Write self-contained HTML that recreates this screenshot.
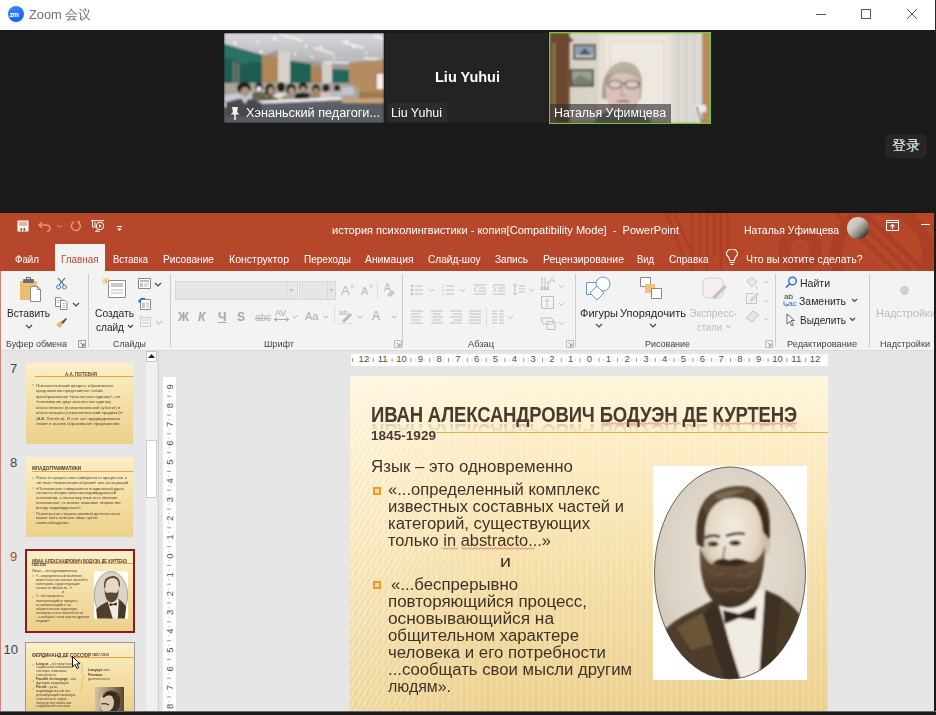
<!DOCTYPE html>
<html><head><meta charset="utf-8">
<style>
*{margin:0;padding:0;box-sizing:border-box}
html,body{width:936px;height:715px;overflow:hidden;background:#1a1a1a;font-family:"Liberation Sans",sans-serif;position:relative}
.a{position:absolute}
.t{position:absolute;white-space:nowrap;line-height:1}
.f{transform-origin:0 0}
.tab{color:#fff;font-size:11px;top:254px}
.rl{color:#444;font-size:9.5px;top:339px}
#ribbon{left:1px;top:271px;width:933px;height:80px;background:#f3f3f3;border-bottom:1px solid #dadada}
.sep{position:absolute;width:1px;background:#cdcdcd;top:274px;height:73px}
.rb{color:#262626;font-size:11px}
.dis{color:#b9b9b9}
.thumb{background:linear-gradient(180deg,#fcefc8 0%,#f6e2ab 40%,#ecd08c 100%);overflow:hidden}
.tx{font-size:4.3px;line-height:5.45px;color:#3e3024;white-space:nowrap;opacity:.9}
.st{font-size:16px;color:#3e3329}
</style></head><body>
<!-- Zoom title bar -->
<div class="a" style="left:0;top:0;width:936px;height:30px;background:#fff"></div>
<div class="a" style="left:8px;top:6px;width:16px;height:16px;border-radius:8px;background:linear-gradient(160deg,#3a8dff,#0b5cf0)"></div>
<div class="t" style="left:9.5px;top:10.5px;font-size:7px;font-weight:bold;color:#fff;letter-spacing:-0.4px">zm</div>
<div class="t f" style="left:29px;top:8px;font-size:13px;color:#707070;--w:62">Zoom 会议</div>
<div class="a" style="left:816px;top:14px;width:10px;height:1px;background:#555"></div>
<div class="a" style="left:861px;top:9px;width:10px;height:10px;border:1px solid #555"></div>
<svg class="a" style="left:906px;top:8px" width="12" height="12"><path d="M1 1L11 11M11 1L1 11" stroke="#555" stroke-width="1"/></svg>
<div class="a" style="left:935px;top:0;width:1px;height:30px;background:#2a2a2a"></div>
<!-- dark area -->
<div class="a" style="left:0;top:30px;width:936px;height:183px;background:#1a1a1a"></div>
<div class="a" style="left:885px;top:134px;width:42px;height:24px;border-radius:6px;background:#262626"></div>
<div class="t" style="left:892px;top:138px;font-size:14px;color:#fff">登录</div>
<!-- tile 1 classroom -->
<svg class="a" style="left:224px;top:33px" width="160" height="90" viewBox="0 0 160 90">
 <defs>
  <linearGradient id="ceil" x1="0" y1="0" x2="0" y2="1"><stop offset="0" stop-color="#dadadd"/><stop offset="1" stop-color="#b0b0b5"/></linearGradient>
  <filter id="tb" x="0" y="0" width="1" height="1"><feGaussianBlur stdDeviation="0.9"/></filter>
 </defs>
 <g filter="url(#tb)">
 <rect width="160" height="90" fill="#a09a92"/>
 <path d="M0 0H160V31L125 30L108 29L80 28L66 27L54 17L38 23L0 11Z" fill="url(#ceil)"/>
 <path d="M0 6L40 16L60 14L90 22L130 26L160 24" fill="none" stroke="#c8c8cc" stroke-width="1.2"/>
 <path d="M56 1L78 8M118 9L140 15M90 15L110 21M150 3L160 6M140 25L158 27M100 29L125 30" stroke="#f8f8fa" stroke-width="1.6"/>
 <g fill="#fff"><circle cx="11" cy="10" r="1.4"/><circle cx="51" cy="6" r="1.4"/><circle cx="34" cy="9" r="1.1"/><circle cx="37" cy="19" r="1.2"/><circle cx="71" cy="21" r="1.1"/><circle cx="82" cy="13" r="1.2"/><circle cx="97" cy="14" r="1.2"/><circle cx="123" cy="8" r="1.3"/><circle cx="130" cy="14" r="1.2"/><circle cx="142" cy="20" r="1"/><circle cx="110" cy="25" r="1"/><circle cx="88" cy="24" r="1.1"/></g>
 <path d="M0 11L38 22V52H0Z" fill="#1d5c52"/>
 <path d="M0 11L38 22L38 30Q28 26 20 32Q10 24 0 26Z" fill="#2a7264"/>
 <path d="M10 28V52M14 30V52" stroke="#8a8070" stroke-width="3" opacity=".7"/>
 <path d="M38 22L54 24V52H38Z" fill="#ae8658"/>
 <path d="M54 17L66 19V51H54Z" fill="#d6d2ca"/>
 <path d="M66 28L87 31V53H66Z" fill="#1f6457"/>
 <path d="M87 33L98 34V53H87Z" fill="#ab8459"/>
 <path d="M98 29L108 30V53H98Z" fill="#d4cfc6"/>
 <path d="M108 36L125 37V55H108Z" fill="#21675a"/>
 <path d="M125 30L160 26V64H125Z" fill="#b38d60"/>
 <rect x="152" y="40" width="8" height="17" fill="#f6f0f0" stroke="#b84838" stroke-width="1.2"/>
 <path d="M125 58L160 60V68L125 66Z" fill="#a07850"/>
 <path d="M0 50H125L135 56V70H0Z" fill="#aaa49c"/>
 <path d="M0 62L40 58V68H0Z" fill="#c8ccd8"/>
 <ellipse cx="35" cy="54" rx="4" ry="4.5" fill="#2a2420"/><ellipse cx="35" cy="56" rx="2.6" ry="2.4" fill="#ececea"/><path d="M28 60Q35 57 42 60V70H28Z" fill="#6a6450"/>
 <ellipse cx="57" cy="54" rx="4" ry="5" fill="#201a18"/><path d="M50 62Q57 58 64 62V70H50Z" fill="#e8e4de"/>
 <ellipse cx="46" cy="57" rx="5" ry="6.5" fill="#1e1816"/><ellipse cx="47" cy="58" rx="3" ry="4" fill="#b0947e"/><path d="M36 66Q46 61 56 66V74H36Z" fill="#5e5432"/>
 <ellipse cx="67" cy="56" rx="5" ry="5.5" fill="#221c1a"/><ellipse cx="67.5" cy="58" rx="3" ry="3.5" fill="#b89c88"/><path d="M57 64Q67 59 78 64V72H57Z" fill="#9a9278"/>
 <ellipse cx="79" cy="54" rx="4.5" ry="4.5" fill="#1c1818"/><ellipse cx="79" cy="56.5" rx="2.8" ry="3" fill="#b09480"/><path d="M71 61Q79 58 87 61V70H71Z" fill="#1e2022"/>
 <ellipse cx="92" cy="56" rx="4" ry="5" fill="#2a2320"/><ellipse cx="92" cy="58" rx="2.5" ry="3" fill="#b09078"/><path d="M85 62Q92 59 99 62V69H85Z" fill="#9a8462"/>
 <ellipse cx="102" cy="55" rx="3.5" ry="4" fill="#2a2320"/><path d="M96 60Q103 57 110 60V67H96Z" fill="#dcbcc0"/>
 <ellipse cx="113" cy="55" rx="3" ry="3.5" fill="#2a2320"/><path d="M107 59Q113 57 119 59V66H107Z" fill="#b8bcc2"/>
 <rect x="118" y="54" width="12" height="8" fill="#c0c4cc"/>
 <path d="M0 70L30 68L115 64L118 67L30 72L0 76Z" fill="#ecebee"/>
 <path d="M0 74L30 71L118 67L160 68V90H0Z" fill="#585c64"/>
 <path d="M0 78L120 70M0 84L150 76" stroke="#6a6e76" stroke-width="1"/>
 <ellipse cx="20" cy="55" rx="7" ry="6" fill="#1b1918"/><ellipse cx="21" cy="59" rx="4.5" ry="5" fill="#b09482"/><path d="M2 70Q20 61 38 70V84H2Z" fill="#484a4e"/><path d="M17 65L21 71L25 65" fill="#c8c8c8"/>
 <path d="M118 66L160 65V70L118 70Z" fill="#c8a478"/>
 </g>
</svg>
<svg class="a" style="left:229px;top:106px" width="12" height="15"><path d="M3 1H9L8 6L10.5 8.5H1.5L4 6Z" fill="#f2f2f2"/><path d="M6 8V14" stroke="#f2f2f2" stroke-width="1.6"/></svg>
<div class="t f" style="left:246px;top:107px;font-size:12px;color:#fff;--w:134">Хэнаньский педагоги...</div>

<!-- tile 2 -->
<div class="a" style="left:385px;top:33px;width:163px;height:90px;background:#232323"></div>
<div class="t f" style="left:435px;top:70px;font-size:14px;font-weight:bold;color:#fff;--w:65">Liu Yuhui</div>
<div class="a" style="left:388px;top:103px;width:59px;height:19px;background:#2c2c2c"></div>
<div class="t f" style="left:391px;top:107px;font-size:12px;color:#fff;--w:51">Liu Yuhui</div>

<!-- tile 3 -->
<div class="a" style="left:549px;top:32px;width:162px;height:92px;background:#7cc142"></div>
<svg class="a" style="left:550px;top:33px" width="160" height="90" viewBox="0 0 160 90">
 <defs>
  <linearGradient id="wall" x1="0" x2="1"><stop offset="0" stop-color="#d6cfc3"/><stop offset="1" stop-color="#e4ded4"/></linearGradient>
  <radialGradient id="hair" cx="50%" cy="35%" r="60%"><stop offset="0" stop-color="#cfc6b6"/><stop offset="1" stop-color="#a79c8a"/></radialGradient>
  <filter id="tb3" x="0" y="0" width="1" height="1"><feGaussianBlur stdDeviation="0.9"/></filter>
 </defs>
 <g filter="url(#tb3)">
 <rect width="160" height="90" fill="url(#wall)"/>
 <path d="M0 0H20V90H0Z" fill="#7b5a3c"/>
 <path d="M0 0H16L24 8L18 10V90H0Z" fill="#6a4a2e"/>
 <path d="M4 10V90" stroke="#94724e" stroke-width="3"/>
 <rect x="23" y="11" width="23" height="16" fill="#5a5650"/><rect x="25" y="13" width="19" height="12" fill="#8fa0b0"/><path d="M27 23L35 15L42 23Z" fill="#4a5868"/><rect x="26" y="22" width="17" height="2" fill="#ccc"/>
 <rect x="20" y="36" width="24" height="18" fill="#4e4a40"/><rect x="22" y="38" width="20" height="14" fill="#9aa090"/><path d="M22 48L30 42L42 48V52H22Z" fill="#7a8070"/>
 <rect x="49" y="0" width="74" height="90" fill="#e6e0d6"/>
 <rect x="56" y="4" width="62" height="86" fill="#ede8e0"/>
 <rect x="60" y="8" width="54" height="72" fill="none" stroke="#ddd6ca" stroke-width="1.2"/>
 <path d="M122 0H152V90H122Z" fill="#dcdad4"/>
 <path d="M128 0V90M136 0V90M144 0V90" stroke="#cdc9c0" stroke-width="1.5"/>
 <path d="M152 0H160V90H152Z" fill="#b78b5b"/>
 <rect x="144" y="72" width="12" height="7" fill="#ececea"/>
 <circle cx="147" cy="75" r="1.2" fill="#333"/>
 <path d="M147 76Q150 84 152 90" stroke="#333" stroke-width="1" fill="none"/>
 <path d="M52 66Q50 36 70 29Q88 27 92 46L91 66Z" fill="url(#hair)"/>
 <path d="M56 50Q58 40 72 39Q88 39 89 50L90 62Q88 80 72 82Q58 80 56 62Z" fill="#d8c0b6"/>
 <path d="M54 48Q62 32 78 34Q90 36 92 50Q84 40 72 40Q62 40 54 48Z" fill="#b7ad9c"/>
 <path d="M56 48Q58 44 62 42" stroke="#a09684" stroke-width="3" fill="none"/>
 <path d="M56 50H90" stroke="#6a6058" stroke-width="1"/>
 <ellipse cx="65" cy="51.5" rx="7" ry="4" fill="#dccac2" stroke="#5a524c" stroke-width="1.2"/>
 <ellipse cx="82" cy="51.5" rx="7" ry="4" fill="#dccac2" stroke="#5a524c" stroke-width="1.2"/>
 <path d="M72 54L71 62Q73 64 76 62" stroke="#b8907e" stroke-width="1.2" fill="none"/>
 <path d="M67 69Q73 67 79 69" stroke="#8a5a50" stroke-width="1.5"/>
 <path d="M44 90Q48 80 60 78H86Q98 80 102 90Z" fill="#7c7c78"/>
 </g>
</svg>
<div class="a" style="left:550px;top:104px;width:121px;height:19px;background:rgba(45,45,45,.62)"></div>
<div class="t f" style="left:554px;top:107px;font-size:12px;color:#fff;--w:112">Наталья Уфимцева</div>
<!-- PPT title + tabs -->
<div class="a" style="left:0;top:213px;width:934px;height:58px;background:#b7472a;overflow:hidden">
  <svg class="a" style="left:600px;top:0" width="334" height="58">
    <g fill="none" stroke="#8a2a12" opacity=".22">
      <path d="M92 0V58M100 0V50M107 0V58M114 0V44M121 0V58M128 0V52" stroke-width="3"/>
      <path d="M66 0L84 44M74 0L90 36" stroke-width="3"/>
      <circle cx="200" cy="36" r="16" stroke-width="12"/>
      <circle cx="282" cy="42" r="46" stroke-width="12"/>
      <path d="M232 -4L296 58M246 -4L310 58M260 -4L324 58" stroke-width="5"/>
    </g>
  </svg>
</div>
<div class="a" style="left:55px;top:244px;width:50px;height:27px;background:#f3f3f3"></div>
<!-- QAT -->
<svg class="a" style="left:17px;top:220px" width="12" height="12"><path d="M0.5 0.5H11.5V11.5H0.5Z" fill="#fff"/><rect x="2" y="1.5" width="8" height="4.5" fill="#e8b4a4"/><rect x="3.5" y="8" width="1.6" height="3" fill="#b7472a"/><rect x="6.5" y="8" width="1.6" height="3" fill="#b7472a"/></svg>
<svg class="a" style="left:38px;top:220px" width="14" height="12"><path d="M4 2L1 5L4 8M1.5 5H8Q12 5 12 8.5Q12 11 9 11.5" fill="none" stroke="#e9907a" stroke-width="1.5"/></svg>
<svg class="a" style="left:56px;top:224px" width="7" height="5"><path d="M1 1L3.5 3.5L6 1" fill="none" stroke="#e9907a" stroke-width="1"/></svg>
<svg class="a" style="left:70px;top:220px" width="12" height="12"><path d="M8.5 2.5A4.5 4.5 0 1 1 4 2" fill="none" stroke="#e9907a" stroke-width="1.5"/><path d="M7 0.5L10.5 1.5L8.5 4.5Z" fill="#e9907a"/></svg>
<svg class="a" style="left:91px;top:220px" width="14" height="12"><path d="M0 0.7H13M1.5 1V7H6M3 3H5M3 5H5" fill="none" stroke="#fff" stroke-width="1"/><circle cx="9" cy="6" r="3.7" fill="none" stroke="#fff" stroke-width="1"/><path d="M8 4.3L10.8 6L8 7.7Z" fill="#fff"/><path d="M5 11L7 9M4 11.3H9" stroke="#fff" stroke-width=".9"/></svg>
<svg class="a" style="left:117px;top:226px" width="5" height="6"><path d="M0 0.5H5" stroke="#fff" stroke-width="1"/><path d="M0 2.5H5L2.5 5Z" fill="#fff"/></svg>
<div class="t f" style="left:332px;top:225px;font-size:11px;color:#fff;--w:347">история психолингвистики - копия[Compatibility Mode]&nbsp; - &nbsp;PowerPoint</div>
<div class="t f" style="left:744px;top:225px;font-size:11px;color:#fff;--w:95">Наталья Уфимцева</div>
<div class="a" style="left:847px;top:217px;width:22px;height:22px;border-radius:50%;overflow:hidden;background:linear-gradient(135deg,#e0ddd6 0%,#c8c4bc 40%,#8a847c 65%,#3a3430 85%,#2a2522 100%)"></div>
<svg class="a" style="left:886px;top:220px" width="13" height="11"><path d="M0.5 0.5H12.5V10.5H0.5Z M0.5 2.5H12.5" fill="none" stroke="#fff" stroke-width="1"/><path d="M6.5 9V4.5M4.5 6.5L6.5 4.5L8.5 6.5" fill="none" stroke="#fff" stroke-width="1.1"/></svg>
<div class="a" style="left:921px;top:224px;width:9px;height:1.2px;background:#fff"></div>

<div class="t tab f" style="left:14.5px;--w:24">Файл</div>
<div class="t tab f" style="left:61px;color:#b7472a;--w:37.5">Главная</div>
<div class="t tab f" style="left:113px;--w:35">Вставка</div>
<div class="t tab f" style="left:163px;--w:51">Рисование</div>
<div class="t tab f" style="left:228.5px;--w:60">Конструктор</div>
<div class="t tab f" style="left:303.5px;--w:47">Переходы</div>
<div class="t tab f" style="left:365px;--w:48.5">Анимация</div>
<div class="t tab f" style="left:428px;--w:52.5">Слайд-шоу</div>
<div class="t tab f" style="left:495px;--w:33">Запись</div>
<div class="t tab f" style="left:542.5px;--w:81">Рецензирование</div>
<div class="t tab f" style="left:637px;--w:17">Вид</div>
<div class="t tab f" style="left:669px;--w:39.5">Справка</div>
<svg class="a" style="left:725px;top:249px" width="14" height="17"><path d="M4.5 11.5Q4.5 9 3 7.5Q1.5 6 1.5 4.8A5.3 4.6 0 0 1 12.5 4.8Q12.5 6 11 7.5Q9.5 9 9.5 11.5Z" fill="none" stroke="#fff" stroke-width="1.1"/><path d="M4.5 13.5H9.5M5.5 15.5H8.5" stroke="#fff" stroke-width="1.1"/></svg>
<div class="t tab f" style="left:746px;--w:116.5">Что вы хотите сделать?</div>
<!-- ===== RIBBON ===== -->
<div id="ribbon" class="a"></div>
<div class="a" style="left:0;top:271px;width:1px;height:440px;background:#cf8474"></div>
<div class="sep" style="left:88px"></div>
<div class="sep" style="left:170px"></div>
<div class="sep" style="left:402px"></div>
<div class="sep" style="left:575px"></div>
<div class="sep" style="left:775px"></div>
<div class="sep" style="left:869px"></div>
<div class="t rl f" style="left:6px;--w:61">Буфер обмена</div>
<div class="t rl f" style="left:113px;--w:33">Слайды</div>
<div class="t rl f" style="left:264px;--w:30">Шрифт</div>
<div class="t rl f" style="left:468px;--w:26">Абзац</div>
<div class="t rl f" style="left:645px;--w:45">Рисование</div>
<div class="t rl f" style="left:787px;--w:70">Редактирование</div>
<div class="t rl f" style="left:880px;--w:50">Надстройки</div>
<!-- launchers -->
<svg class="a" style="left:78px;top:340px" width="8" height="8"><path d="M0.5 0.5H7.5V7.5H0.5Z" fill="none" stroke="#999" stroke-width="1"/><path d="M2.5 2.5L6 6M6 3.5V6H3.5" fill="none" stroke="#666" stroke-width="1"/></svg>
<svg class="a" style="left:394px;top:340px" width="8" height="8"><path d="M0.5 0.5H7.5V7.5H0.5Z" fill="none" stroke="#bbb" stroke-width="1"/><path d="M2.5 2.5L6 6M6 3.5V6H3.5" fill="none" stroke="#999" stroke-width="1"/></svg>
<svg class="a" style="left:566px;top:340px" width="8" height="8"><path d="M0.5 0.5H7.5V7.5H0.5Z" fill="none" stroke="#bbb" stroke-width="1"/><path d="M2.5 2.5L6 6M6 3.5V6H3.5" fill="none" stroke="#999" stroke-width="1"/></svg>
<svg class="a" style="left:765px;top:340px" width="8" height="8"><path d="M0.5 0.5H7.5V7.5H0.5Z" fill="none" stroke="#bbb" stroke-width="1"/><path d="M2.5 2.5L6 6M6 3.5V6H3.5" fill="none" stroke="#999" stroke-width="1"/></svg>

<!-- Clipboard -->
<div class="a" style="left:20px;top:281px;width:17px;height:19px;background:#eebd6d"></div>
<div class="a" style="left:23px;top:279px;width:11px;height:4px;background:#6d6d7a;border-radius:1px"></div>
<div class="a" style="left:26px;top:277px;width:5px;height:3px;border:1px solid #6d6d7a;border-bottom:none"></div>
<svg class="a" style="left:30px;top:286px" width="12" height="16"><path d="M0.5 0.5H7.5L10.5 3.5V15.5H0.5Z" fill="#fff" stroke="#8a8a8a"/><path d="M7.5 0.5V3.5H10.5" fill="none" stroke="#8a8a8a"/></svg>
<div class="t rb f" style="left:7px;top:308px;font-size:11px;--w:43">Вставить</div>
<svg class="a" style="left:25px;top:324px" width="8" height="5"><path d="M1 1L4 4L7 1" fill="none" stroke="#444" stroke-width="1.2"/></svg>
<svg class="a" style="left:55px;top:277px" width="13" height="13"><path d="M3 1L9 8M10 1L4 8" stroke="#555" stroke-width="1.1"/><circle cx="3.5" cy="10" r="2" fill="none" stroke="#3f7fd0" stroke-width="1"/><circle cx="9.5" cy="10" r="2" fill="none" stroke="#3f7fd0" stroke-width="1"/></svg>
<svg class="a" style="left:55px;top:297px" width="13" height="13"><path d="M0.5 0.5H5L7 2.5V9.5H0.5Z" fill="#fff" stroke="#888"/><path d="M5.5 3.5H10L12 5.5V12.5H5.5Z" fill="#fff" stroke="#888"/><path d="M2 3.5H5M2 5.5H4M7.5 6.5H10M7.5 8.5H10M7.5 10.5H10" stroke="#7d9cc8" stroke-width="0.7"/></svg>
<svg class="a" style="left:72px;top:302px" width="8" height="5"><path d="M1 1L4 4L7 1" fill="none" stroke="#444" stroke-width="1.2"/></svg>
<svg class="a" style="left:55px;top:317px" width="13" height="12"><path d="M1 8L5 11L8 7L5 4Z" fill="#e8b865"/><path d="M6 5L11 1L12 2L8 7" fill="#555"/></svg>

<!-- Slides -->
<svg class="a" style="left:101px;top:276px" width="26" height="23"><path d="M7.5 4.5H24.5V21.5H7.5Z" fill="#fff" stroke="#8a8a8a" rx="1"/><rect x="10" y="7" width="12" height="4" fill="#c8c8c8"/><path d="M10 14H22M10 17H22" stroke="#bbb" stroke-width="1"/><path d="M5 1V9M1 5H9M2 2L8 8M8 2L2 8" stroke="#e8c060" stroke-width="1"/></svg>
<div class="t rb f" style="left:95px;top:308px;font-size:11px;--w:39">Создать</div>
<div class="t rb f" style="left:95.5px;top:322px;font-size:11px;--w:28">слайд</div>
<svg class="a" style="left:127px;top:324px" width="7" height="5"><path d="M1 1L3.5 3.5L6 1" fill="none" stroke="#444" stroke-width="1.2"/></svg>
<svg class="a" style="left:138px;top:278px" width="14" height="12"><path d="M0.5 0.5H12.5V10.5H0.5Z" fill="#fff" stroke="#888"/><rect x="2" y="2" width="9" height="2" fill="#bbb"/><rect x="2" y="5" width="3" height="4" fill="#c4c4c4"/><path d="M6 6H11M6 8H10" stroke="#bbb"/></svg>
<svg class="a" style="left:154px;top:282px" width="8" height="5"><path d="M1 1L4 4L7 1" fill="none" stroke="#444" stroke-width="1.2"/></svg>
<svg class="a" style="left:138px;top:297px" width="14" height="13"><path d="M2.5 2.5H12.5V12.5H2.5Z" fill="#fff" stroke="#888"/><rect x="4" y="6" width="3" height="5" fill="#c4c4c4"/><path d="M8 6H11M8 8H11M8 10H11" stroke="#bbb"/><path d="M1 5Q3 0 7 2" fill="none" stroke="#2f6fc4" stroke-width="1.4"/><path d="M0 3L1.5 6L4 4Z" fill="#2f6fc4"/></svg>
<svg class="a" style="left:138px;top:315px" width="14" height="12"><path d="M2.5 2.5H12.5V11.5H2.5Z" fill="none" stroke="#d8c4cc"/><path d="M4 5H11M4 8H11" stroke="#d8c4cc"/><path d="M0 1H4" stroke="#e8d0d0"/></svg>
<svg class="a" style="left:155px;top:320px" width="8" height="5"><path d="M1 1L4 4L7 1" fill="none" stroke="#c8c8c8" stroke-width="1.2"/></svg>

<!-- Font -->
<div class="a" style="left:175px;top:281px;width:123px;height:19px;background:#e6e6e6;border:1px solid #d9d9d9"></div>
<div class="a" style="left:286px;top:282px;width:1px;height:17px;background:#d9d9d9"></div>
<svg class="a" style="left:289px;top:289px" width="6" height="4"><path d="M0 0H5L2.5 3Z" fill="#c4c4c4"/></svg>
<div class="a" style="left:299px;top:281px;width:37px;height:19px;background:#e6e6e6;border:1px solid #d9d9d9"></div>
<div class="a" style="left:327px;top:282px;width:1px;height:17px;background:#d9d9d9"></div>
<svg class="a" style="left:329px;top:289px" width="6" height="4"><path d="M0 0H5L2.5 3Z" fill="#c4c4c4"/></svg>
<div class="t dis" style="left:341px;top:284px;font-size:13px">A</div><div class="t dis" style="left:350px;top:283px;font-size:7px">˄</div>
<div class="t dis" style="left:361px;top:286px;font-size:11px">A</div><div class="t dis" style="left:369px;top:283px;font-size:7px">˅</div>
<div class="a" style="left:377px;top:282px;width:1px;height:17px;background:#dedede"></div>
<div class="t dis" style="left:384px;top:283px;font-size:10px">A</div>
<svg class="a" style="left:385px;top:289px" width="11" height="8"><path d="M2 6L7 1L10 4L5 8Z" fill="#d4c4c8"/></svg>
<div class="t dis" style="left:178px;top:311px;font-size:12px;font-weight:bold;color:#a8a8a8">Ж</div>
<div class="t dis" style="left:198px;top:311px;font-size:12px;font-weight:bold;font-style:italic;color:#a8a8a8">К</div>
<div class="t dis" style="left:218px;top:311px;font-size:12px;font-weight:bold;color:#a8a8a8;text-decoration:underline">Ч</div>
<div class="t dis" style="left:237px;top:311px;font-size:12px;font-weight:bold;color:#a8a8a8">S</div>
<div class="t dis" style="left:255px;top:313px;font-size:10px;color:#b4b4b4;text-decoration:line-through">abc</div>
<div class="t dis" style="left:275px;top:309px;font-size:9px;color:#a8a8a8">AV</div>
<svg class="a" style="left:274px;top:317px" width="15" height="5"><path d="M0 2.5H15M0 2.5L3 0.5M0 2.5L3 4.5M15 2.5L12 0.5M15 2.5L12 4.5" stroke="#a8a8a8"/></svg>
<svg class="a" style="left:292px;top:315px" width="6" height="4"><path d="M0.5 0.5L3 3L5.5 0.5" fill="none" stroke="#b4b4b4"/></svg>
<div class="t dis" style="left:305px;top:311px;font-size:11px;color:#b0b0b0">Aa</div>
<svg class="a" style="left:323px;top:315px" width="6" height="4"><path d="M0.5 0.5L3 3L5.5 0.5" fill="none" stroke="#b4b4b4"/></svg>
<div class="a" style="left:334px;top:306px;width:1px;height:18px;background:#dedede"></div>
<div class="t" style="left:339px;top:309px;font-size:8px;color:#b4b4b4">ab</div>
<svg class="a" style="left:339px;top:310px" width="14" height="14"><path d="M3 11L11 3L13 5L5 13Z" fill="#c4b4b8"/><path d="M0 13.5H13" stroke="#ddd"/></svg>
<svg class="a" style="left:357px;top:315px" width="6" height="4"><path d="M0.5 0.5L3 3L5.5 0.5" fill="none" stroke="#b4b4b4"/></svg>
<div class="t dis" style="left:372px;top:310px;font-size:12px;color:#acacac">A</div>
<svg class="a" style="left:391px;top:315px" width="6" height="4"><path d="M0.5 0.5L3 3L5.5 0.5" fill="none" stroke="#b4b4b4"/></svg>

<!-- Paragraph -->
<svg class="a" style="left:410px;top:284px;overflow:visible" width="170" height="46" fill="none" stroke="#c0c0c0" stroke-width="1">
 <circle cx="2" cy="2" r="1" fill="#c0c0c0"/><circle cx="2" cy="6" r="1" fill="#c0c0c0"/><circle cx="2" cy="10" r="1" fill="#c0c0c0"/>
 <path d="M5 2H13M5 6H13M5 10H13"/><path d="M19 5L21.5 7.5L24 5"/>
 <path d="M33 0V4M33 5V8M33 9V12" stroke="#d0d0d0"/><path d="M36 2H44M36 6H44M36 10H44"/><path d="M50 5L52.5 7.5L55 5"/>
 <path d="M64 1H76M69 4H76M69 7H76M64 10H76M67 3L64 5.5L67 8"/>
 <path d="M83 1H95M88 4H95M88 7H95M83 10H95M83 3L86 5.5L83 8"/>
 <path d="M105 0V11M103 2L105 0L107 2M103 9L105 11L107 9M109 2H115M109 5H115M109 8H115"/><path d="M119 5L121.5 7.5L124 5"/>
 <path d="M132 -7V5M135 -7V5M138 -3V5M130.5 5.5H139.5M131 3L132 5L133 3M134 3L135 5L136 3M137 3L138 5L139 3" /><path d="M149 1L151.5 3.5L154 1"/>
 <path d="M1 27H13M1 30H10M1 33H13M1 36H10M1 39H13"/>
 <path d="M21 27H33M23 30H31M21 33H33M23 36H31M21 39H33"/>
 <path d="M40 27H52M43 30H52M40 33H52M43 36H52M40 39H52"/>
 <path d="M59 27H71M59 30H71M59 33H71M59 36H71M59 39H71"/>
 <path d="M76.5 23V43" stroke="#dedede"/>
 <path d="M82 27H87M82 30H87M82 33H87M82 36H87M82 39H87M89 27H94M89 30H94M89 33H94M89 36H94M89 39H94"/><path d="M98 32L100.5 34.5L103 32"/>
 <path d="M131.5 12.5H143.5V24.5H131.5ZM137 14V18M135 16L137 18L139 16M137 23V19" /><path d="M149 19L151.5 21.5L154 19"/>
 <path d="M131 34H141L143 36V40H133Z M137 37.5H145V45.5H137Z"/><path d="M149 38L151.5 40.5L154 38"/>
</svg>
<div class="t" style="left:549px;top:276px;font-size:9px;color:#b8b8b8">A</div>

<!-- Drawing -->
<svg class="a" style="left:585px;top:276px" width="27" height="24"><path d="M1.5 6.5H13.5V18.5H1.5Z" fill="#fff" stroke="#6b93c9"/><circle cx="18" cy="8" r="7" fill="#fff" stroke="#6b93c9"/><path d="M12 10L19 17L12 24L5 17Z" fill="#fff" stroke="#6b93c9"/></svg>
<div class="t rb f" style="left:580px;top:308px;font-size:11px;--w:38">Фигуры</div>
<svg class="a" style="left:595px;top:323px" width="8" height="5"><path d="M1 1L4 4L7 1" fill="none" stroke="#444" stroke-width="1.2"/></svg>
<svg class="a" style="left:640px;top:277px" width="26" height="22"><path d="M0.5 0.5H10.5V9.5H0.5Z" fill="#fff" stroke="#888"/><rect x="5" y="7" width="10" height="9" fill="#eec27a"/><path d="M11.5 11.5H21.5V21.5H11.5Z" fill="#fff" stroke="#888"/></svg>
<div class="t rb f" style="left:620px;top:308px;font-size:11px;--w:66">Упорядочить</div>
<svg class="a" style="left:649px;top:323px" width="8" height="5"><path d="M1 1L4 4L7 1" fill="none" stroke="#444" stroke-width="1.2"/></svg>
<svg class="a" style="left:702px;top:277px" width="26" height="24"><rect x="1" y="1" width="20" height="20" rx="5" fill="#f6eef2" stroke="#d8cdd2"/><path d="M10 20L22 8L25 10L13 22Z" fill="#c8c0c4"/></svg>
<div class="t rb f dis" style="left:689px;top:308px;font-size:11px;--w:48;color:#bdbdbd">Экспресс-</div>
<div class="t rb f dis" style="left:697px;top:322px;font-size:11px;--w:25;color:#bdbdbd">стили</div>
<svg class="a" style="left:725px;top:324px" width="7" height="5"><path d="M1 1L3.5 3.5L6 1" fill="none" stroke="#c8c8c8" stroke-width="1.1"/></svg>
<svg class="a" style="left:744px;top:276px" width="30" height="56" fill="none" stroke="#c4c4c4">
 <path d="M3 5L8 1L13 6L8 11Z" fill="#e8e8e8"/><path d="M12 10Q14 13 12 13" />
 <path d="M20 5L22 7L24 5"/>
 <path d="M2.5 17.5H10M2.5 17.5V27.5H12.5V20" /><path d="M6 24L13 17L14.5 18.5L7.5 25.5Z" fill="#ddd"/>
 <path d="M20 24L22 26L24 24"/>
 <path d="M2 42L9 35L15 39L8 46Z" fill="#e4e4e4"/>
 <path d="M20 42L22 44L24 42"/>
</svg>

<!-- Editing -->
<svg class="a" style="left:785px;top:276px" width="13" height="13"><circle cx="7.5" cy="5" r="3.8" fill="none" stroke="#2f6fc4" stroke-width="1.4"/><path d="M5 7.5L1 11.5" stroke="#2f6fc4" stroke-width="1.6"/></svg>
<div class="t rb f" style="left:800px;top:278px;font-size:11px;--w:30">Найти</div>
<div class="t" style="left:784px;top:293px;font-size:8px;color:#444">ab</div>
<div class="t" style="left:788px;top:300px;font-size:8px;color:#2f6fc4">ac</div>
<svg class="a" style="left:783px;top:301px" width="6" height="6"><path d="M1 0V4H5M3.5 2.5L5 4L3.5 5.5" fill="none" stroke="#2f6fc4" stroke-width="0.9"/></svg>
<div class="t rb f" style="left:799px;top:296px;font-size:11px;--w:47">Заменить</div>
<svg class="a" style="left:851px;top:298px" width="7" height="5"><path d="M1 1L3.5 3.5L6 1" fill="none" stroke="#444" stroke-width="1.2"/></svg>
<svg class="a" style="left:786px;top:313px" width="10" height="14"><path d="M1 1L1 11L3.5 8.5L6 13L7.5 12L5 7.5L8.5 7.5Z" fill="#fff" stroke="#555" stroke-width="0.9"/></svg>
<div class="t rb f" style="left:800px;top:315px;font-size:11px;--w:46">Выделить</div>
<svg class="a" style="left:849px;top:317px" width="7" height="5"><path d="M1 1L3.5 3.5L6 1" fill="none" stroke="#444" stroke-width="1.2"/></svg>
<div class="a" style="left:900px;top:286px;width:9px;height:9px;border-radius:50%;background:#cfcfcf"></div>
<div class="t rb f dis" style="left:876px;top:308px;font-size:11px;--w:60;color:#bdbdbd">Надстройки</div>
<!-- ===== MAIN AREA ===== -->
<div class="a" style="left:1px;top:351px;width:935px;height:360px;background:#e6e6e6"></div>
<!-- scrollbar panel -->
<div class="a" style="left:146px;top:351px;width:11px;height:360px;background:#f0f0f0"></div>
<div class="a" style="left:146px;top:351px;width:11px;height:11px;background:#fff;border:1px solid #c8c8c8"></div>
<svg class="a" style="left:148px;top:354px" width="7" height="5"><path d="M0 4H7L3.5 0Z" fill="#222"/></svg>
<div class="a" style="left:146px;top:440px;width:11px;height:58px;background:#fff;border:1px solid #cfcfcf"></div>
<div class="a" style="left:158px;top:351px;width:1px;height:360px;background:#d4d4d4"></div>

<!-- thumbnails -->
<div class="t" style="left:10px;top:362px;font-size:13px;color:#444">7</div>
<div class="t" style="left:10px;top:456px;font-size:13px;color:#444">8</div>
<div class="t" style="left:10px;top:550px;font-size:13px;color:#c43e1c">9</div>
<div class="t" style="left:3.5px;top:643px;font-size:13px;color:#444">10</div>

<div class="a thumb" style="left:26px;top:363px;width:107px;height:81px">
  <div class="t f" style="left:39px;top:9px;font-size:5px;font-weight:bold;color:#5b4a3c;--w:32">А.А. ПОТЕБНЯ</div>
  <div class="a" style="left:9px;top:13px;width:98px;height:1px;background:#e9a13b"></div>
  <div class="a" style="left:6px;top:21px;width:1.5px;height:1.5px;background:#f2c478"></div>
  <div class="a tx f" style="left:10px;top:20px;--w:87">Психологический процесс образования<br>предложения представляет собой<br>преобразование «мысленных единиц», это<br>«связывание двух мысленных единиц:<br>объясняемого (психологический субъект) и<br>объясняющего (психологический предикат)»<br>(А.А. Потебня). И этот акт предицирования<br>лежит в основе образования предложения.</div>
</div>
<div class="a thumb" style="left:26px;top:457px;width:107px;height:80px">
  <div class="t f" style="left:6px;top:9px;font-size:5px;font-weight:bold;color:#4b3a2f;--w:49">МЛАДОГРАММАТИКИ</div>
  <div class="a" style="left:6px;top:13.5px;width:101px;height:1px;background:#e9a13b"></div>
  <div class="a tx f" style="left:10px;top:19px;line-height:4.8px;--w:92">Язык не процесс или совокупность процессов, а<br>система «психических образов» или ассоциаций<br><span style="line-height:5.6px">«Психическое совершается в единичной душе,</span><br>согласно общим законам индивидуальной<br>психологии, а поскольку язык есть явление<br>психическое, то всякое языковое творчество<br>всегда индивидуально»<br><span style="line-height:5.6px">Психическая сторона речевой деятельности</span><br>может быть познана лишь путем<br>самонаблюдения.</div>
  <div class="a" style="left:6px;top:20px;width:1.5px;height:1.5px;background:#f2c478"></div>
  <div class="a" style="left:6px;top:30px;width:1.5px;height:1.5px;background:#f2c478"></div>
  <div class="a" style="left:6px;top:55px;width:1.5px;height:1.5px;background:#f2c478"></div>
</div>
<div class="a" style="left:25px;top:549px;width:110px;height:84px;border:2px solid #8e1b1b"></div>
<div class="a thumb" style="left:27px;top:551px;width:106px;height:80px">
  <div class="t f" style="left:5px;top:7.5px;font-size:5px;font-weight:bold;color:#4b3a2f;--w:95">ИВАН АЛЕКСАНДРОВИЧ БОДУЭН ДЕ КУРТЕНЭ</div>
  <div class="a" style="left:4px;top:12px;width:102px;height:1px;background:#e9a13b"></div>
  <div class="t f" style="left:5px;top:12.5px;font-size:3.5px;font-weight:bold;color:#4b3a2f;--w:14">1845-1929</div>
  <div class="t f" style="left:5px;top:18px;font-size:4px;color:#4b3a2f;--w:45">Язык – это одновременно</div>
  <div class="a tx f" style="left:9px;top:23px;line-height:4.1px;font-size:3.5px;--w:53">«...определенный комплекс<br>известных составных частей и<br>категорий, существующих<br>только in abstracto...»<br><span style="padding-left:25px">и</span><br>«...беспрерывно<br>повторяющийся процесс,<br>основывающийся на<br>общительном характере<br>человека и его потребности<br>...сообщать свои мысли другим<br>людям».</div>
  <div class="a" style="left:5px;top:24px;width:1.5px;height:1.5px;background:#f2c478"></div>
  <div class="a" style="left:5px;top:45px;width:1.5px;height:1.5px;background:#f2c478"></div>
  <svg class="a" style="left:67px;top:19.5px" width="34" height="48" viewBox="0 0 154 214"><rect width="154" height="214" fill="#fff"/><ellipse cx="77" cy="107" rx="75.5" ry="106" fill="#dbd3c5" stroke="#555" stroke-width="2"/><path d="M10 170Q30 150 62 136L84 214H14Z" fill="#4d3d2a"/><path d="M146 160Q130 135 110 124L102 214H140Z" fill="#4a3a28"/><path d="M64 140L112 128L108 214L88 214Z" fill="#f1ece3"/><path d="M50 58Q52 30 80 27Q108 28 114 56L114 96Q108 124 80 128Q54 124 50 96Z" fill="#e6dac6"/><path d="M46 74Q42 42 58 30Q76 18 96 22Q116 30 118 56L117 72L112 66Q112 44 100 34Q88 28 74 32Q56 38 52 58L51 78Z" fill="#5d4934"/><path d="M48 80Q48 104 54 120Q62 140 78 141Q98 138 106 118Q112 102 112 80Q108 94 100 98Q90 94 78 96Q66 94 58 98Q50 92 48 80Z" fill="#5e4733"/><path d="M70 144L86 148L104 140L102 154L86 152L72 158Z" fill="#2f241a"/></svg>
</div>
<div class="a" style="left:25px;top:642px;width:110px;height:70px;border:1px solid #9a9a9a;border-bottom:none"></div>
<div class="a thumb" style="left:26px;top:643px;width:108px;height:68px">
  <div class="t f" style="left:6px;top:9.5px;font-size:5px;font-weight:bold;color:#4b3a2f;--w:59">ФЕРДИНАНД ДЕ СОССЮР</div>
  <div class="t f" style="left:66px;top:11px;font-size:3px;font-weight:bold;color:#4b3a2f;--w:17">1857-1913</div>
  <div class="a" style="left:44px;top:14px;width:64px;height:1px;background:#e9a13b"></div>
  <div class="a tx f" style="left:10px;top:19.5px;line-height:3.9px;font-size:3.3px;--w:40"><b>Langue</b> - абстрактная<br>национальноязыковая<br>система, языковая<br>способность<br><b>Faculté du langage</b> - как<br>функция индивидов<br><b>Parole</b> - речь,<br>индивидуальный акт,<br>реализующий языковую<br>способность через<br>посредство языка как<br>социальной системы.</div>
  <div class="a" style="left:6px;top:21px;width:1.5px;height:1.5px;background:#f2c478"></div>
  <div class="a" style="left:6px;top:37px;width:1.5px;height:1.5px;background:#f2c478"></div>
  <div class="a" style="left:6px;top:45px;width:1.5px;height:1.5px;background:#f2c478"></div>
  <svg class="a" style="left:52px;top:18px" width="8" height="32"><path d="M1 1Q4 1 4 4V14L7 16L4 18V28Q4 31 1 31" fill="none" stroke="#e9b460" stroke-width="0.8"/></svg>
  <div class="a tx" style="left:62px;top:25px;width:30px;line-height:4.6px;font-size:3.5px"><b>Langage</b> или<br><b>Речевая</b><br>деятельность</div>
  <svg class="a" style="left:69px;top:44px" width="29" height="24" viewBox="0 0 29 24"><defs><linearGradient id="sg" x1="0" x2="1"><stop offset="0" stop-color="#d2c2a6"/><stop offset=".5" stop-color="#a08868"/><stop offset="1" stop-color="#5a4632"/></linearGradient></defs><rect width="29" height="24" fill="url(#sg)"/><path d="M6 24Q4 14 8 8Q12 3 18 4Q24 5 25 12Q26 20 22 24Z" fill="#3e3024"/><path d="M5 13Q6 7 12 7Q18 8 19 14Q19 22 14 24H7Q4 20 5 13Z" fill="#d9c8ac"/><path d="M6 17Q10 16 14 18" stroke="#4a3a2a" stroke-width="1.2" fill="none"/><path d="M8 10Q12 6 20 8" stroke="#2e241a" stroke-width="2" fill="none"/></svg>
</div>
<!-- cursor -->
<svg class="a" style="left:72px;top:656px" width="9" height="14"><path d="M0.5 0.5V11L3 8.5L5 12.5L6.8 11.7L4.8 7.8H8Z" fill="#fff" stroke="#000" stroke-width="0.9"/></svg>

<!-- vertical ruler -->
<div class="a" style="left:163px;top:377px;width:13px;height:334px;background:#fff"></div>
<svg class="a" style="left:163px;top:377px" width="13" height="334" id="vr"></svg>
<!-- horizontal ruler -->
<div class="a" style="left:351px;top:354px;width:477px;height:12px;background:#fff"></div>
<svg class="a" style="left:351px;top:354px" width="477" height="12" id="hr"></svg>

<!-- SLIDE -->
<div class="a" id="slide" style="left:350px;top:376px;width:478px;height:336px;overflow:hidden">
  <div class="a" style="left:0;top:0;width:478px;height:336px;background:linear-gradient(180deg,#fdf2cf 0%,#fcecc2 20%,#f7e3ae 45%,#f2d99c 70%,#ebcf88 100%)"></div>
  <div class="a" style="left:0;top:0;width:478px;height:336px;background:repeating-linear-gradient(90deg,rgba(255,255,255,0) 0px,rgba(255,255,255,.18) 3px,rgba(255,255,255,0) 6px)"></div>
  <div class="a" style="left:0;top:0;width:220px;height:336px;background:repeating-linear-gradient(-60deg,rgba(255,255,255,0) 0px,rgba(255,255,255,.45) 2px,rgba(255,255,255,0) 5px);-webkit-mask-image:linear-gradient(100deg,#000 10%,transparent 70%)"></div>
  <div class="a" style="left:0;top:0;width:478px;height:60px;background:linear-gradient(180deg,rgba(255,248,225,.7),rgba(255,248,225,0))"></div>
  <div class="a" style="left:86px;top:56px;width:392px;height:1px;background:#e3b050"></div>
  <div class="t f" style="left:21px;top:28px;font-size:22px;font-weight:bold;color:#4a392e;--w:426;letter-spacing:-0.2px">ИВАН АЛЕКСАНДРОВИЧ БОДУЭН ДЕ КУРТЕНЭ</div>
  <div class="a" style="left:21px;top:46.5px;width:430px;height:10px;overflow:hidden;opacity:.22;-webkit-mask-image:linear-gradient(180deg,#000,transparent)">
    <div class="t f" style="left:0;top:-3px;font-size:22px;font-weight:bold;color:#4a392e;--w:426;letter-spacing:-0.2px;transform-origin:0 50%"><span style="display:inline-block;transform:scaleY(-1)">ИВАН АЛЕКСАНДРОВИЧ БОДУЭН ДЕ КУРТЕНЭ</span></div>
  </div>
<svg class="a" style="left:0;top:46px" width="478" height="3"><path d="M252 1.5L253.5 0.5L255.0 2.5L256.5 0.5L258.0 2.5L259.5 0.5L261.0 2.5L262.5 0.5L264.0 2.5L265.5 0.5L267.0 2.5L268.5 0.5L270.0 2.5L271.5 0.5L273.0 2.5L274.5 0.5L276.0 2.5L277.5 0.5L279.0 2.5L280.5 0.5L282.0 2.5L283.5 0.5L285.0 2.5L286.5 0.5L288.0 2.5L289.5 0.5L291.0 2.5L292.5 0.5L294.0 2.5L295.5 0.5L297.0 2.5L298.5 0.5L300.0 2.5L301.5 0.5L303.0 2.5L304.5 0.5L306.0 2.5L307.5 0.5L309.0 2.5L310.5 0.5L312.0 2.5L313.5 0.5L315.0 2.5L316.5 0.5L318.0 2.5L319.5 0.5L321.0 2.5L322.5 0.5L324.0 2.5L325.5 0.5L327.0 2.5L328.5 0.5L330.0 2.5 M363 1.5L364.5 0.5L366.0 2.5L367.5 0.5L369.0 2.5L370.5 0.5L372.0 2.5L373.5 0.5L375.0 2.5L376.5 0.5L378.0 2.5L379.5 0.5L381.0 2.5L382.5 0.5L384.0 2.5L385.5 0.5L387.0 2.5L388.5 0.5L390.0 2.5L391.5 0.5L393.0 2.5L394.5 0.5L396.0 2.5L397.5 0.5L399.0 2.5L400.5 0.5L402.0 2.5L403.5 0.5L405.0 2.5L406.5 0.5L408.0 2.5L409.5 0.5L411.0 2.5L412.5 0.5L414.0 2.5L415.5 0.5L417.0 2.5L418.5 0.5L420.0 2.5L421.5 0.5L423.0 2.5L424.5 0.5L426.0 2.5L427.5 0.5L429.0 2.5L430.5 0.5L432.0 2.5L433.5 0.5L435.0 2.5L436.5 0.5L438.0 2.5L439.5 0.5L441.0 2.5L442.5 0.5L444.0 2.5L445.5 0.5L447.0 2.5" fill="none" stroke="#e04848" stroke-width=".7" opacity=".8"/></svg>
  <div class="t f" style="left:21px;top:53px;font-size:13px;font-weight:bold;color:#4b3a2f;--w:65">1845-1929</div>
  <div class="t f" style="left:21px;top:83px;font-size:16px;color:#3e3329;--w:202">Язык – это одновременно</div>
  <div class="a" style="left:23px;top:111px;width:8px;height:8px;border:2px solid #ec9a2c;background:#fbdca0"></div>
  <div class="t f st" style="left:38px;top:106px;--w:212">«...определенный комплекс</div>
  <div class="t f st" style="left:38px;top:123px;--w:236">известных составных частей и</div>
  <div class="t f st" style="left:38px;top:140px;--w:202">категорий, существующих</div>
  <div class="t f st" style="left:38px;top:157px;--w:163">только in abstracto...»</div>
  <svg class="a" style="left:0;top:171px" width="478" height="3"><path d="M91 1.5L92.5 0.5L94.0 2.5L95.5 0.5L97.0 2.5L98.5 0.5L100.0 2.5L101.5 0.5L103.0 2.5L104.5 0.5L106.0 2.5L107.5 0.5 M111 1.5L112.5 0.5L114.0 2.5L115.5 0.5L117.0 2.5L118.5 0.5L120.0 2.5L121.5 0.5L123.0 2.5L124.5 0.5L126.0 2.5L127.5 0.5L129.0 2.5L130.5 0.5L132.0 2.5L133.5 0.5L135.0 2.5L136.5 0.5L138.0 2.5L139.5 0.5L141.0 2.5L142.5 0.5L144.0 2.5L145.5 0.5L147.0 2.5L148.5 0.5L150.0 2.5L151.5 0.5L153.0 2.5L154.5 0.5L156.0 2.5L157.5 0.5L159.0 2.5L160.5 0.5L162.0 2.5L163.5 0.5L165.0 2.5L166.5 0.5L168.0 2.5L169.5 0.5L171.0 2.5L172.5 0.5L174.0 2.5L175.5 0.5L177.0 2.5L178.5 0.5L180.0 2.5L181.5 0.5L183.0 2.5L184.5 0.5" fill="none" stroke="#e04848" stroke-width=".7" opacity=".8"/></svg>
  <div class="t f st" style="left:150px;top:178px;--w:11">и</div>
  <div class="a" style="left:23px;top:205px;width:8px;height:8px;border:2px solid #ec9a2c;background:#fbdca0"></div>
  <div class="t f st" style="left:41px;top:201px;--w:127">«...беспрерывно</div>
  <div class="t f st" style="left:38px;top:218px;--w:199">повторяющийся процесс,</div>
  <div class="t f st" style="left:38px;top:235px;--w:166">основывающийся на</div>
  <div class="t f st" style="left:38px;top:252px;--w:191">общительном характере</div>
  <div class="t f st" style="left:38px;top:269px;--w:218">человека и его потребности</div>
  <div class="t f st" style="left:38px;top:286px;--w:244">...сообщать свои мысли другим</div>
  <div class="t f st" style="left:38px;top:303px;--w:63">людям».</div>
  <!-- portrait -->
  <svg class="a" style="left:303px;top:90px" width="154" height="214" viewBox="0 0 154 214">
 <defs>
  <radialGradient id="pbg" cx="50%" cy="45%" r="60%"><stop offset="0" stop-color="#e9e3d8"/><stop offset=".7" stop-color="#dbd3c5"/><stop offset="1" stop-color="#cdc3b2"/></radialGradient>
  <clipPath id="ov"><ellipse cx="77" cy="107" rx="75.5" ry="106"/></clipPath>
  <radialGradient id="face" cx="50%" cy="35%" r="65%"><stop offset="0" stop-color="#f2ece2"/><stop offset=".6" stop-color="#e4d8c4"/><stop offset="1" stop-color="#c2b196"/></radialGradient>
  <linearGradient id="brd" x1="0" y1="0" x2="0" y2="1"><stop offset="0" stop-color="#6e563e"/><stop offset=".5" stop-color="#5a4431"/><stop offset="1" stop-color="#3e2e20"/></linearGradient>
  <filter id="bl" x="-10%" y="-10%" width="120%" height="120%"><feGaussianBlur stdDeviation="0.8"/></filter>
 </defs>
 <rect width="154" height="214" fill="#fff"/>
 <ellipse cx="77" cy="107" rx="75.5" ry="106" fill="url(#pbg)"/>
 <g clip-path="url(#ov)">
 <g filter="url(#bl)">
  <!-- suit -->
  <path d="M0 178 Q12 160 30 150 Q46 142 64 132 L86 214 L0 214Z" fill="#4d3d2a"/>
  <path d="M154 158 Q142 140 126 130 L112 124 L104 214 L154 214Z" fill="#4a3a28"/>
  <path d="M24 162 Q38 152 52 146 L60 178 L38 184Z" fill="#6a5538"/>
  <!-- shirt -->
  <path d="M64 128 L112 124 L108 214 L88 214Z" fill="#f1ece3"/>
  <path d="M62 136 L88 214 L72 214 L50 148Z" fill="#3b2e20"/>
  <path d="M112 124 L106 214 L120 214 L128 132Z" fill="#3f3122"/>
  <!-- ear -->
  <ellipse cx="112" cy="78" rx="5.5" ry="11.5" fill="#d0bfa4"/>
  <!-- face -->
  <path d="M50 60 Q52 32 78 29 Q104 30 110 58 L110 96 Q104 124 78 128 Q54 124 50 96Z" fill="url(#face)"/>
  <!-- hair -->
  <path d="M44 78 Q40 42 58 28 Q76 17 96 21 Q116 30 117 56 L116 74 L110 66 Q108 44 98 36 Q86 30 72 33 Q56 38 52 60 L51 82Z" fill="#5d4934"/>
  <path d="M44 78 Q42 54 50 42 L54 50 Q51 62 51 82Z" fill="#4a3828"/>
  <path d="M104 30 Q116 42 117 72 L110 66 Q109 46 100 36Z" fill="#3a2b1d"/>
  <path d="M60 30 Q76 22 94 24 Q82 28 68 34Z" fill="#7d6a52"/>
  <!-- brows/eyes -->
  <path d="M52 72 Q59 68 67 71 M73 70 Q82 66 92 68" stroke="#4a3a2a" stroke-width="2.8" fill="none"/>
  <ellipse cx="60" cy="78" rx="5.5" ry="2.8" fill="#5e4c3a"/>
  <ellipse cx="82" cy="77" rx="6" ry="2.8" fill="#5e4c3a"/>
  <ellipse cx="61" cy="78" rx="2.2" ry="1.7" fill="#2a2018"/>
  <ellipse cx="83" cy="77" rx="2.2" ry="1.7" fill="#2a2018"/>
  <path d="M72 80 L70 93 Q74 97 79 94" stroke="#a08a70" stroke-width="2" fill="none"/>
  <path d="M50 84 Q54 96 60 96" stroke="#b8a68c" stroke-width="3" fill="none" opacity=".6"/>
  <!-- beard -->
  <path d="M47 80 Q46 106 52 122 Q60 142 78 142 Q98 140 106 120 Q112 104 112 80 Q108 92 100 96 Q90 94 78 96 Q66 94 58 98 Q50 92 47 80Z" fill="url(#brd)"/>
  <path d="M56 104 Q66 112 72 106 M84 108 Q94 114 102 104 M60 122 Q70 128 78 122 Q88 128 98 120" stroke="#7a644a" stroke-width="1.6" fill="none" opacity=".7"/>
  <path d="M60 96 Q68 90 76 94 Q86 90 96 96 Q88 101 76 100 Q66 101 60 96Z" fill="#3a2a1c"/>
  <!-- bow tie -->
  <path d="M70 144 L86 148 L104 140 L102 154 L86 152 L72 158Z" fill="#2f241a"/>
 </g>
 </g>
 <ellipse cx="77" cy="107" rx="75.5" ry="106" fill="none" stroke="#4a4038" stroke-width="0.8"/>
</svg>

</div>
<div class="a" style="left:934px;top:213px;width:2px;height:502px;background:#1a1a1a"></div>
<div class="a" style="left:0;top:711px;width:936px;height:1px;background:#6a6a6a"></div><div class="a" style="left:0;top:712px;width:936px;height:3px;background:#1a1a1a"></div>
<script>
(function(){
 // rulers
 var hr=document.getElementById('hr'),s='';
 var c=238.5, step=18.8;
 for(var i=-12;i<=12;i++){var x=c+i*step;s+='<text x="'+x+'" y="8.3" font-size="9.5" text-anchor="middle" fill="#505050" font-family="Liberation Sans">'+Math.abs(i)+'</text>';
   if(i<12){ s+='<rect x="'+(x+step/2-0.5)+'" y="4" width="1" height="4" fill="#9a9a9a"/>'; s+='<rect x="'+(x+step/4-0.5)+'" y="5.5" width="1" height="1" fill="#b0b0b0"/><rect x="'+(x+3*step/4-0.5)+'" y="5.5" width="1" height="1" fill="#b0b0b0"/>';}
 }
 s+='<rect x="1" y="4" width="1" height="4" fill="#9a9a9a"/>';
 hr.innerHTML=s;
 var vr=document.getElementById('vr');s='';
 var cy=556-377;
 for(var i=-9;i<=9;i++){var y=cy+i*step; if(y<0||y>334)continue; s+='<text transform="translate(10,'+y+') rotate(-90)" font-size="9.5" text-anchor="middle" fill="#505050" font-family="Liberation Sans">'+Math.abs(i)+'</text>';
   s+='<rect x="4" y="'+(y+step/2-0.5)+'" width="4" height="1" fill="#9a9a9a"/><rect x="5.5" y="'+(y+step/4-0.5)+'" width="1" height="1" fill="#b0b0b0"/><rect x="5.5" y="'+(y+3*step/4-0.5)+'" width="1" height="1" fill="#b0b0b0"/>';}
 vr.innerHTML=s;
 document.querySelectorAll('.f').forEach(function(e){var w=parseFloat(getComputedStyle(e).getPropertyValue('--w'));if(!w)return;var r=e.getBoundingClientRect().width;if(r>0){var sc=w/r;e.style.transform='scaleX('+sc+')';}});
})();
</script>
</body></html>
